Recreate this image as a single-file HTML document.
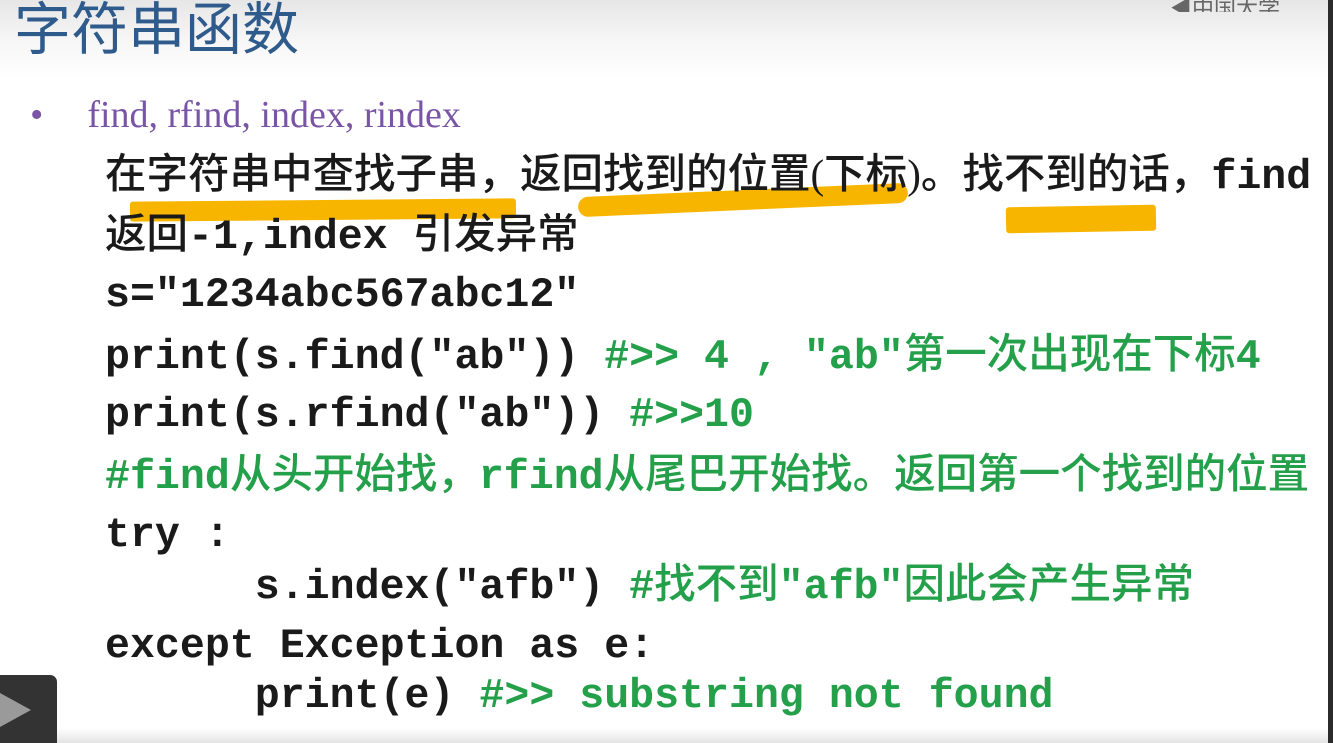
<!DOCTYPE html>
<html><head><meta charset="utf-8"><style>
html,body{margin:0;padding:0}
body{width:1333px;height:743px;position:relative;overflow:hidden;background:#fff;font-family:"Liberation Mono","Noto Sans CJK SC",monospace}
.top{position:absolute;left:0;top:0;width:1333px;height:80px;background:linear-gradient(#e6e6e6,#f6f6f6 50%,#fff)}
.title{position:absolute;left:14px;top:-8px;font:57px/76px "Liberation Sans","Noto Sans CJK SC",sans-serif;color:#2f5b8c}
.bul{position:absolute;left:30px;top:92px;font:38px/46px "Liberation Serif",serif;color:#7a55a5}
.l{position:absolute;white-space:pre;font-size:41.6px;line-height:60px;height:60px;font-weight:bold;color:#1a1a1a}
.l span{line-height:60px}
.c{font-family:"Noto Sans CJK SC",sans-serif;font-weight:500;font-size:41.5px}
.s{font-family:"Liberation Serif",serif;font-weight:normal;font-size:41px}
.g{color:#24a04a}
.hl{position:absolute;background:#f7b500;border-radius:3px}
.rb{position:absolute;right:0;top:0;width:5px;height:743px;background:#2b2b2b}
.bot{position:absolute;left:0;top:728px;width:1333px;height:15px;background:linear-gradient(#fff,#e4e4e4)}
.play{position:absolute;left:0;top:675px;width:57px;height:68px;background:#333;border-top-right-radius:7px}
.play:after{content:"";position:absolute;left:0;top:18px;border-left:31px solid #9a9a9a;border-top:17px solid transparent;border-bottom:17px solid transparent}
</style></head><body>
<div class="top"></div>
<div style="position:absolute;left:1170px;top:0;font:22px/14px 'Noto Sans CJK SC',sans-serif;color:#666;overflow:hidden;height:12px">◀中国大学MOOC</div>
<div class="title">字符串函数</div>
<div class="bul">•<span style="display:inline-block;width:44px"></span>find, rfind, index, rindex</div>
<div class="hl" style="left:130px;top:200px;width:386px;height:20px;transform:rotate(-0.5deg)"></div>
<div class="hl" style="left:578px;top:190px;width:330px;height:20px;transform:rotate(-2.5deg);border-radius:10px"></div>
<div class="hl" style="left:1006px;top:206px;width:150px;height:26px;transform:rotate(-1deg)"></div>
<div class="l" style="left:105px;top:140px"><span class="c">在字符串中查找子串，返回找到的位置</span><span class="s">(</span><span class="c">下标</span><span class="s">)</span><span class="c">。找不到的话，</span>find</div>
<div class="l" style="left:105px;top:200px"><span class="c">返回</span>-1,index <span class="c">引发异常</span></div>
<div class="l" style="left:105px;top:266px">s="1234abc567abc12"</div>
<div class="l" style="left:105px;top:320px">print(s.find("ab")) <span class="g">#&gt;&gt; 4 , "ab"<span class="c">第一次出现在下标</span>4</span></div>
<div class="l" style="left:105px;top:386px">print(s.rfind("ab")) <span class="g">#&gt;&gt;10</span></div>
<div class="l g" style="left:105px;top:440px">#find<span class="c">从头开始找，</span>rfind<span class="c">从尾巴开始找。返回第一个找到的位置</span></div>
<div class="l" style="left:105px;top:506px">try :</div>
<div class="l" style="left:105px;top:550px">      s.index("afb") <span class="g">#<span class="c">找不到</span>"afb"<span class="c">因此会产生异常</span></span></div>
<div class="l" style="left:105px;top:617px">except Exception as e:</div>
<div class="l" style="left:105px;top:667px">      print(e) <span class="g">#&gt;&gt; substring not found</span></div>
<div class="bot"></div>
<div class="play"></div>
<div class="rb"></div>
</body></html>
